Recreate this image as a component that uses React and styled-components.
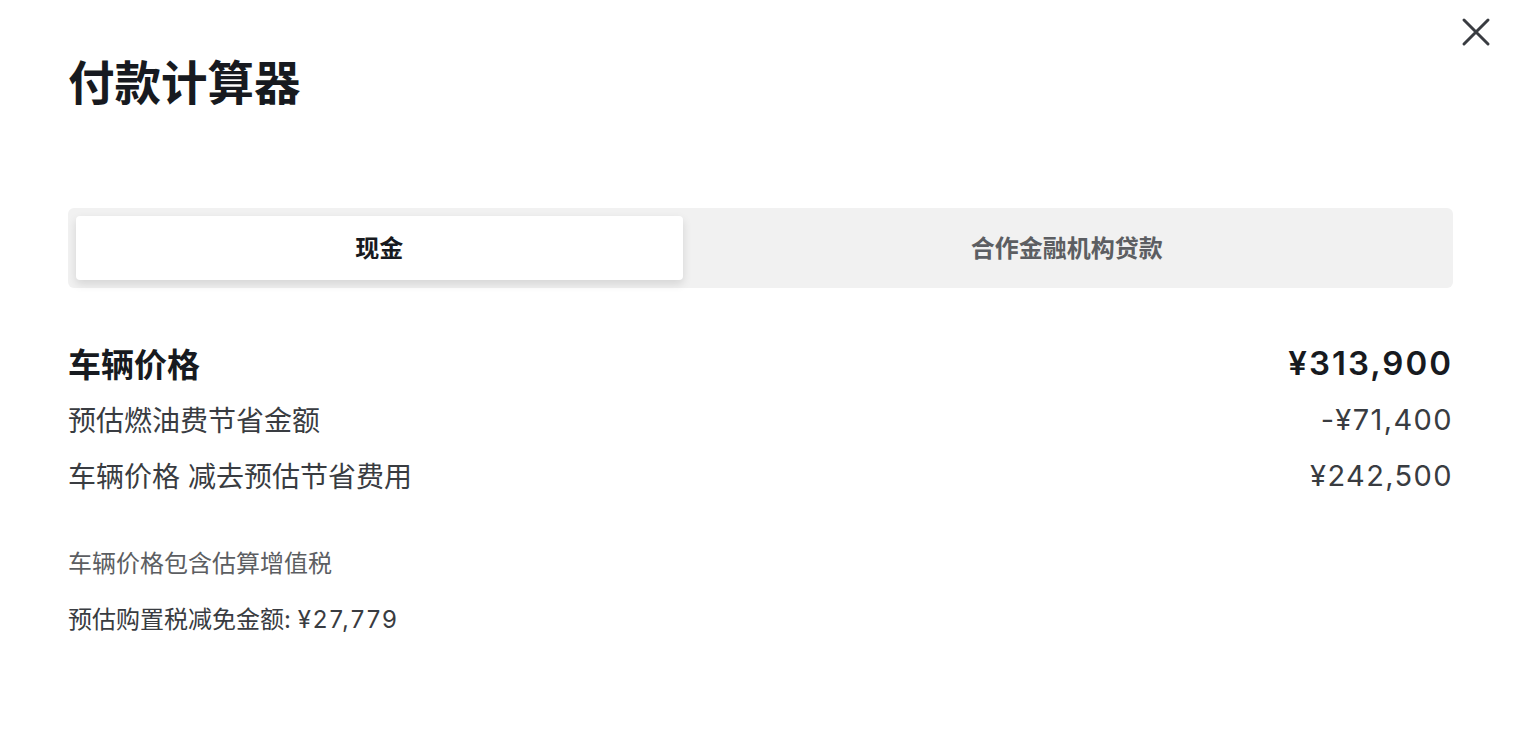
import React from "react";
import styled, { createGlobalStyle } from "styled-components";

const Global = createGlobalStyle`
  html, body { margin: 0; padding: 0; background: #fff; }
  body { font-family: "Inter", "Noto Sans CJK SC", sans-serif; color: #171a20; }
`;

const Page = styled.div`
  position: relative;
  width: 1522px;
  height: 754px;
  box-sizing: border-box;
  padding: 50px 69px 0 68px;
  background: #fff;
`;

const CloseButton = styled.button`
  position: absolute;
  top: 16px;
  right: 30px;
  width: 32px;
  height: 32px;
  padding: 0;
  border: 0;
  background: transparent;
  display: flex;
  align-items: center;
  justify-content: center;
  cursor: pointer;
`;

const Title = styled.h1`
  margin: 0;
  font-size: 46.5px;
  line-height: 66px;
  font-weight: 700;
  color: #171a20;
`;

const Tabs = styled.div`
  margin-top: 92px;
  display: grid;
  grid-template-columns: 607fr 763fr;
  padding: 8px;
  background: #f1f1f1;
  border-radius: 6px;
`;

const Tab = styled.div`
  height: 64px;
  padding: 0 0 3px ${(p) => (p.$active ? "0" : "6px")};
  box-sizing: border-box;
  display: flex;
  align-items: center;
  justify-content: center;
  border-radius: 4px;
  font-size: 24px;
  font-weight: 700;
  color: ${(p) => (p.$active ? "#171a20" : "#5c5e62")};
  background: ${(p) => (p.$active ? "#fff" : "transparent")};
  box-shadow: ${(p) => (p.$active ? "0 4px 10px rgba(0,0,0,0.12)" : "none")};
`;

const Rows = styled.div`
  margin-top: 47px;
  display: flex;
  flex-direction: column;
`;

const Row = styled.div`
  display: flex;
  justify-content: space-between;
  align-items: center;
  height: 56px;
`;

const Label = styled.span`
  font-size: ${(p) => (p.$strong ? "33px" : "28px")};
  font-weight: ${(p) => (p.$strong ? 700 : 400)};
  color: ${(p) => (p.$strong ? "#171a20" : "#393c41")};
`;

const Amount = styled.span`
  font-size: ${(p) => (p.$strong ? "33px" : "29px")};
  font-weight: ${(p) => (p.$strong ? 600 : 400)};
  letter-spacing: ${(p) => (p.$strong ? "2px" : "1.4px")};
  color: ${(p) => (p.$strong ? "#171a20" : "#393c41")};
`;

const Notes = styled.div`
  margin-top: 44px;
  display: flex;
  flex-direction: column;
  gap: 22px;
`;

const Note = styled.p`
  margin: 0;
  font-size: 24px;
  line-height: 34px;
  color: ${(p) => (p.$dark ? "#393c41" : "#5c5e62")};
`;

const Figure = styled.span`
  letter-spacing: 2px;
`;

export default function App() {
  return (
    <>
      <Global />
      <Page>
        <CloseButton aria-label="关闭">
          <svg width="30" height="30" viewBox="0 0 30 30">
            <path d="M3 3 L27 27 M27 3 L3 27" stroke="#393c41" strokeWidth="3" strokeLinecap="round" />
          </svg>
        </CloseButton>
        <Title>付款计算器</Title>
        <Tabs>
          <Tab $active>现金</Tab>
          <Tab>合作金融机构贷款</Tab>
        </Tabs>
        <Rows>
          <Row>
            <Label $strong>车辆价格</Label>
            <Amount $strong>¥313,900</Amount>
          </Row>
          <Row>
            <Label>预估燃油费节省金额</Label>
            <Amount>-¥71,400</Amount>
          </Row>
          <Row>
            <Label>车辆价格 减去预估节省费用</Label>
            <Amount>¥242,500</Amount>
          </Row>
        </Rows>
        <Notes>
          <Note>车辆价格包含估算增值税</Note>
          <Note $dark>预估购置税减免金额: <Figure>¥27,779</Figure></Note>
        </Notes>
      </Page>
    </>
  );
}
